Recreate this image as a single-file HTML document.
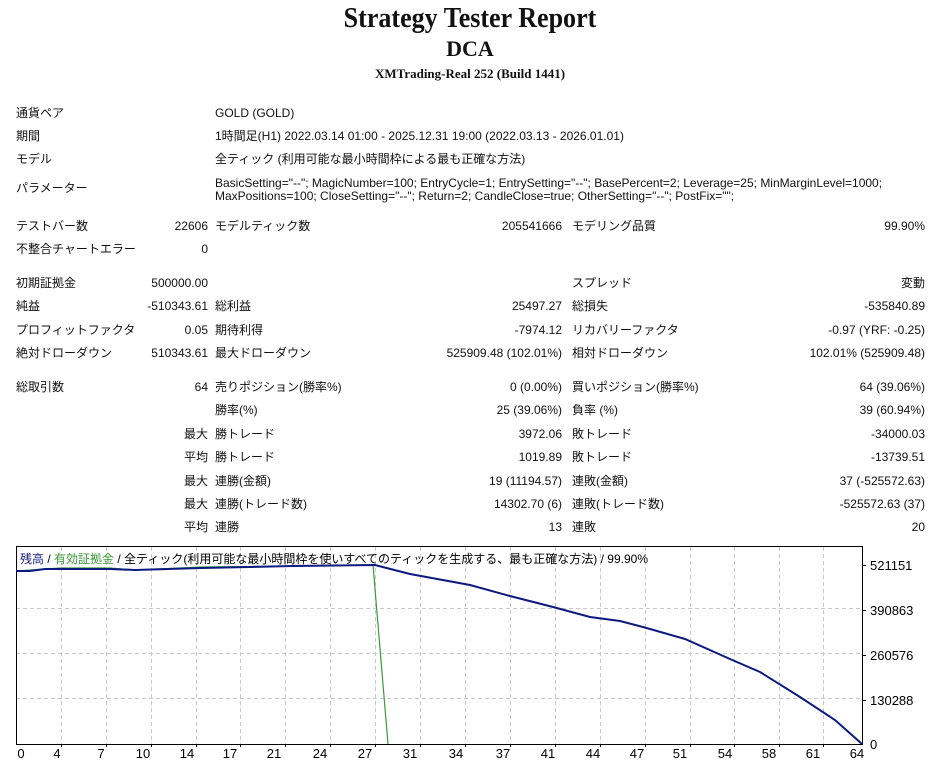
<!DOCTYPE html>
<html><head><meta charset="utf-8"><style>
body{margin:0;width:940px;height:761px;background:#fff;position:relative;overflow:hidden;font-family:"Liberation Sans","Noto Sans CJK JP",sans-serif;font-size:12px;color:#111}
.t{position:absolute;white-space:nowrap;line-height:14px}
.r{text-align:right}
h1,h2,h3{margin:0;position:absolute;left:0;width:940px;text-align:center;font-family:"Liberation Serif",serif;font-weight:bold}
h1{top:3px;font-size:28px;line-height:32px;transform:scaleX(.93)}
h2{top:37px;font-size:22px;line-height:24px}
h3{top:66px;font-size:13px;line-height:15px}
svg text{font-family:"Liberation Sans","Noto Sans CJK JP",sans-serif;font-size:13px}
</style></head><body>
<h1>Strategy Tester Report</h1>
<h2>DCA</h2>
<h3>XMTrading-Real 252 (Build 1441)</h3>

<div class="t" style="left:16px;top:106px">通貨ペア</div><div class="t" style="left:215px;top:106px">GOLD (GOLD)</div>
<div class="t" style="left:16px;top:129px">期間</div><div class="t" style="left:215px;top:129px">1時間足(H1) 2022.03.14 01:00 - 2025.12.31 19:00 (2022.03.13 - 2026.01.01)</div>
<div class="t" style="left:16px;top:152px">モデル</div><div class="t" style="left:215px;top:152px">全ティック (利用可能な最小時間枠による最も正確な方法)</div>
<div class="t" style="left:16px;top:181px">パラメーター</div>
<div class="t" style="left:215px;top:177px;line-height:13px">BasicSetting="--"; MagicNumber=100; EntryCycle=1; EntrySetting="--"; BasePercent=2; Leverage=25; MinMarginLevel=1000;<br>MaxPositions=100; CloseSetting="--"; Return=2; CandleClose=true; OtherSetting="--"; PostFix="";</div>

<div class="t" style="left:16px;top:219px">テストバー数</div><div class="t r" style="right:732px;top:219px">22606</div><div class="t" style="left:215px;top:219px">モデルティック数</div><div class="t r" style="right:378px;top:219px">205541666</div><div class="t" style="left:572px;top:219px">モデリング品質</div><div class="t r" style="right:15px;top:219px">99.90%</div>
<div class="t" style="left:16px;top:242px">不整合チャートエラー</div><div class="t r" style="right:732px;top:242px">0</div>

<div class="t" style="left:16px;top:276px">初期証拠金</div><div class="t r" style="right:732px;top:276px">500000.00</div><div class="t" style="left:572px;top:276px">スプレッド</div><div class="t r" style="right:15px;top:276px">変動</div>
<div class="t" style="left:16px;top:299px">純益</div><div class="t r" style="right:732px;top:299px">-510343.61</div><div class="t" style="left:215px;top:299px">総利益</div><div class="t r" style="right:378px;top:299px">25497.27</div><div class="t" style="left:572px;top:299px">総損失</div><div class="t r" style="right:15px;top:299px">-535840.89</div>
<div class="t" style="left:16px;top:323px">プロフィットファクタ</div><div class="t r" style="right:732px;top:323px">0.05</div><div class="t" style="left:215px;top:323px">期待利得</div><div class="t r" style="right:378px;top:323px">-7974.12</div><div class="t" style="left:572px;top:323px">リカバリーファクタ</div><div class="t r" style="right:15px;top:323px">-0.97 (YRF: -0.25)</div>
<div class="t" style="left:16px;top:346px">絶対ドローダウン</div><div class="t r" style="right:732px;top:346px">510343.61</div><div class="t" style="left:215px;top:346px">最大ドローダウン</div><div class="t r" style="right:378px;top:346px">525909.48 (102.01%)</div><div class="t" style="left:572px;top:346px">相対ドローダウン</div><div class="t r" style="right:15px;top:346px">102.01% (525909.48)</div>

<div class="t" style="left:16px;top:380px">総取引数</div><div class="t r" style="right:732px;top:380px">64</div><div class="t" style="left:215px;top:380px">売りポジション(勝率%)</div><div class="t r" style="right:378px;top:380px">0 (0.00%)</div><div class="t" style="left:572px;top:380px">買いポジション(勝率%)</div><div class="t r" style="right:15px;top:380px">64 (39.06%)</div>
<div class="t" style="left:215px;top:403px">勝率(%)</div><div class="t r" style="right:378px;top:403px">25 (39.06%)</div><div class="t" style="left:572px;top:403px">負率 (%)</div><div class="t r" style="right:15px;top:403px">39 (60.94%)</div>
<div class="t r" style="right:732px;top:427px">最大</div><div class="t" style="left:215px;top:427px">勝トレード</div><div class="t r" style="right:378px;top:427px">3972.06</div><div class="t" style="left:572px;top:427px">敗トレード</div><div class="t r" style="right:15px;top:427px">-34000.03</div>
<div class="t r" style="right:732px;top:450px">平均</div><div class="t" style="left:215px;top:450px">勝トレード</div><div class="t r" style="right:378px;top:450px">1019.89</div><div class="t" style="left:572px;top:450px">敗トレード</div><div class="t r" style="right:15px;top:450px">-13739.51</div>
<div class="t r" style="right:732px;top:474px">最大</div><div class="t" style="left:215px;top:474px">連勝(金額)</div><div class="t r" style="right:378px;top:474px">19 (11194.57)</div><div class="t" style="left:572px;top:474px">連敗(金額)</div><div class="t r" style="right:15px;top:474px">37 (-525572.63)</div>
<div class="t r" style="right:732px;top:497px">最大</div><div class="t" style="left:215px;top:497px">連勝(トレード数)</div><div class="t r" style="right:378px;top:497px">14302.70 (6)</div><div class="t" style="left:572px;top:497px">連敗(トレード数)</div><div class="t r" style="right:15px;top:497px">-525572.63 (37)</div>
<div class="t r" style="right:732px;top:520px">平均</div><div class="t" style="left:215px;top:520px">連勝</div><div class="t r" style="right:378px;top:520px">13</div><div class="t" style="left:572px;top:520px">連敗</div><div class="t r" style="right:15px;top:520px">20</div>

<svg style="position:absolute;left:0;top:540px" width="940" height="221" viewBox="0 540 940 221">
<g stroke="#c8c8c8" stroke-dasharray="4,3" stroke-width="1">
<path d="M61.5 547V744M106.5 547V744M151.5 547V744M196.5 547V744M240.5 547V744M285.5 547V744M330.5 547V744M375.5 547V744M420.5 547V744M465.5 547V744M510.5 547V744M555.5 547V744M600.5 547V744M645.5 547V744M690.5 547V744M734.5 547V744M779.5 547V744M823.5 547V744"/>
<path d="M16 608.5H862M16 653.5H862M16 698.5H862"/>
</g>
<rect x="16.5" y="546.5" width="846" height="198" fill="none" stroke="#000"/>
<g stroke="#000"><path d="M61.5 744v3M106.5 744v3M151.5 744v3M196.5 744v3M240.5 744v3M285.5 744v3M330.5 744v3M375.5 744v3M420.5 744v3M465.5 744v3M510.5 744v3M555.5 744v3M600.5 744v3M645.5 744v3M690.5 744v3M734.5 744v3M779.5 744v3M823.5 744v3M862 565.5h4M862 610.5h4M862 655.5h4M862 700.5h4"/></g>
<polyline fill="none" stroke="#3a9a3a" stroke-width="1.2" points="16,571 45,569 60,568 110,568 135,570 202,567 293,566 373,565 388,744"/>
<polyline fill="none" stroke="#0c1a80" stroke-width="2" points="16,571 30,571 45,569 110,569 135,570 202,568 293,566 375,565 410,574 470,585 510,596 553,607 590,617 620,621 643,627 685,639 730,659 760,672 800,697 835,720 862,744"/>
<text x="20" y="563" style="font-size:12px"><tspan fill="#1a237e">残高</tspan> / <tspan fill="#3a9a3a">有効証拠金</tspan> / 全ティック(利用可能な最小時間枠を使いすべてのティックを生成する、最も正確な方法) / 99.90%</text>
<g text-anchor="start"><text x="870" y="570">521151</text><text x="870" y="615">390863</text><text x="870" y="660">260576</text><text x="870" y="705">130288</text><text x="870" y="749">0</text></g>
<g text-anchor="middle"><text x="21" y="758">0</text><text x="57" y="758">4</text><text x="101" y="758">7</text><text x="143" y="758">10</text><text x="187" y="758">14</text><text x="230" y="758">17</text><text x="274" y="758">21</text><text x="320" y="758">24</text><text x="365" y="758">27</text><text x="410" y="758">31</text><text x="456" y="758">34</text><text x="503" y="758">37</text><text x="548" y="758">41</text><text x="593" y="758">44</text><text x="637" y="758">47</text><text x="680" y="758">51</text><text x="725" y="758">54</text><text x="769" y="758">58</text><text x="813" y="758">61</text><text x="857" y="758">64</text></g>
</svg>
</body></html>
